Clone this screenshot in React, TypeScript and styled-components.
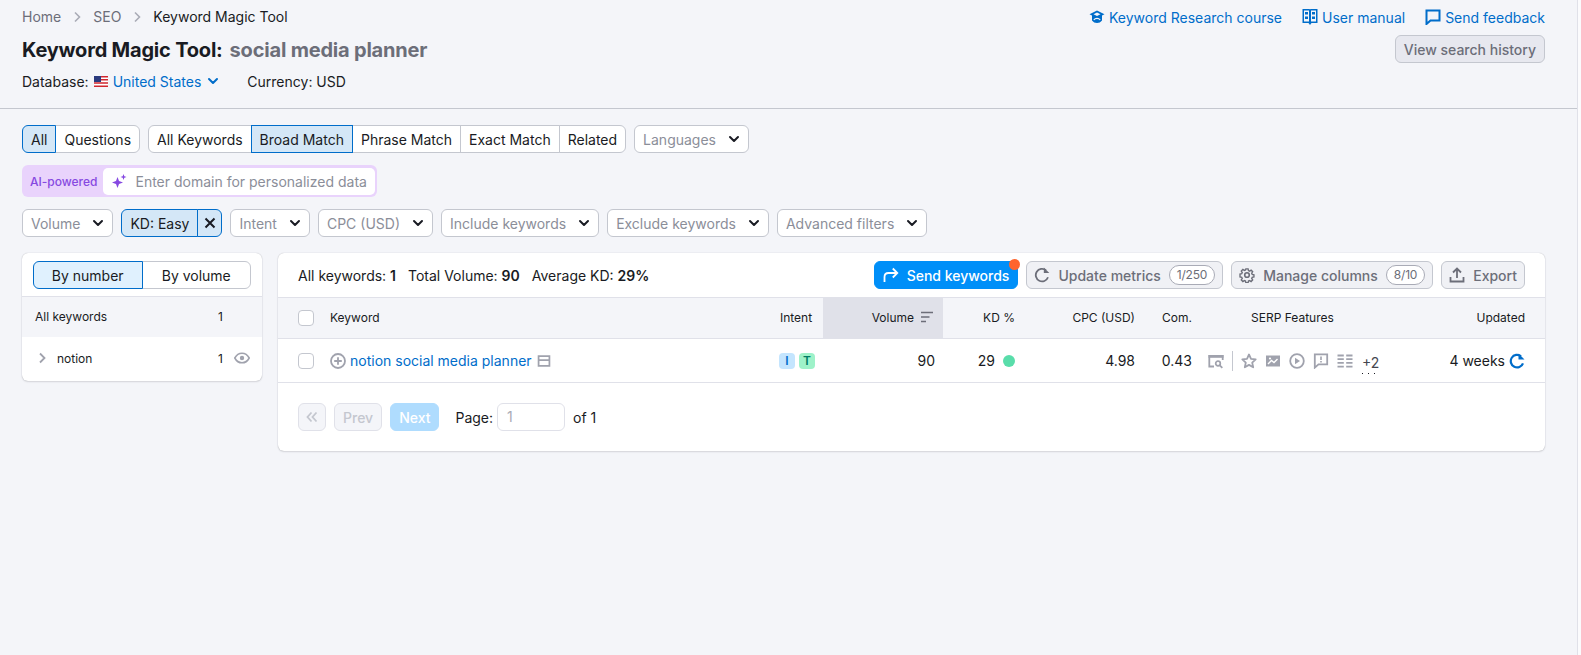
import { ReactNode } from 'react';
import styled, { createGlobalStyle } from 'styled-components';

const GlobalStyle = createGlobalStyle`
  html, body {
    margin: 0;
    padding: 0;
    height: 100%;
    background: #f4f5f9;
    color: #191b23;
    font-family: Inter, "Liberation Sans", sans-serif;
    font-size: 14px;
  }
  * {
    box-sizing: border-box;
  }
`;

const Page = styled.div`
  width: 1581px;
  height: 655px;
  overflow: hidden;
  padding-right: 3px;
  background: #fbfbfd;
`;

const Inner = styled.div`
  height: 100%;
  background: #f4f5f9;
  border-right: 1px solid #e0e1e9;
`;

const Top = styled.header`
  height: 109px;
  padding: 8px 32px 0 22px;
  border-bottom: 1px solid #c4c7cf;
  display: flex;
  justify-content: space-between;
`;

const TopLeft = styled.div`
  display: flex;
  flex-direction: column;
`;

const TopRight = styled.div`
  display: flex;
  flex-direction: column;
  align-items: flex-end;
`;

const Crumbs = styled.nav`
  display: flex;
  align-items: center;
  height: 18px;
  gap: 8px;
  color: #6c6e79;
  line-height: 18px;
`;

const CrumbCurrent = styled.span`
  color: #191b23;
`;

const Title = styled.h1`
  margin: 12px 0 0;
  font-size: 20px;
  line-height: 24px;
  font-weight: 700;
  letter-spacing: -0.2px;
`;

const TitleQuery = styled.span`
  margin-left: 7px;
  color: #6c6e79;
`;

const DbRow = styled.div`
  display: flex;
  align-items: center;
  margin-top: 9px;
  height: 20px;
`;

const Flag = styled.svg`
  width: 14px;
  height: 11px;
  margin: 0 5px 0 5px;
`;

const BlueLink = styled.a`
  color: #006dca;
  display: inline-flex;
  align-items: center;
`;

const DbChevron = styled.span`
  display: flex;
  margin-left: 6px;
`;

const Currency = styled.span`
  margin-left: 28px;
`;

const HelpLinks = styled.div`
  display: flex;
  align-items: center;
  gap: 20px;
  height: 18px;
`;

const HelpLink = styled(BlueLink)`
  gap: 4px;
`;

const HistoryButton = styled.button`
  margin-top: 9px;
  height: 28px;
  padding: 0 8px;
  border: 1px solid #c4c7cf;
  border-radius: 6px;
  background: #e7e8ef;
  color: #6c6e79;
  font: 500 14px Inter, sans-serif;
`;

const Content = styled.main`
  padding: 16px 32px 0 22px;
`;

const Row = styled.div<{ $mt?: number }>`
  display: flex;
  align-items: center;
  gap: 8px;
  margin-top: ${p => p.$mt ?? 0}px;
`;

const Segment = styled.div`
  display: flex;
  height: 28px;
`;

const SegmentItem = styled.button<{ $active?: boolean }>`
  height: 28px;
  padding: 0 8px;
  margin-left: -1px;
  border: 1px solid ${p => (p.$active ? '#006dca' : '#c4c7cf')};
  background: ${p => (p.$active ? '#d4e7f7' : '#fff')};
  color: #191b23;
  font: 400 14px Inter, sans-serif;
  position: relative;
  z-index: ${p => (p.$active ? 1 : 0)};
  &:first-child {
    margin-left: 0;
    border-radius: 6px 0 0 6px;
  }
  &:last-child {
    border-radius: 0 6px 6px 0;
  }
`;

const ClearItem = styled(SegmentItem)`
  display: flex;
  align-items: center;
  padding: 0 3.5px;
`;

const Select = styled.button`
  height: 28px;
  display: inline-flex;
  align-items: center;
  gap: 12px;
  padding: 0 8px;
  border: 1px solid #c4c7cf;
  border-radius: 6px;
  background: #fff;
  color: #8b8e99;
  font: 400 14px Inter, sans-serif;
`;

const AiBar = styled.div`
  display: inline-flex;
  align-items: center;
  height: 32px;
  padding: 2px;
  border-radius: 6px;
  background: #e9d3fc;
`;

const AiLabel = styled.span`
  padding: 0 6px;
  color: #8649e1;
  font-size: 12px;
  font-weight: 500;
`;

const AiInput = styled.div`
  display: flex;
  align-items: center;
  gap: 8px;
  width: 272px;
  height: 27px;
  padding: 0 8px;
  border-radius: 5px;
  background: #fff;
  color: #8b8e99;
`;

const Panels = styled.div`
  display: flex;
  gap: 16px;
  align-items: flex-start;
  margin-top: 16px;
`;

const Card = styled.section`
  background: #fff;
  border-radius: 6px;
  box-shadow: 0 0 1px rgba(25, 27, 35, 0.3), 0 1px 2px rgba(25, 27, 35, 0.12);
`;

const SideCard = styled(Card)`
  width: 240px;
  flex: none;
`;

const SideTabs = styled.div`
  display: flex;
  padding: 8px 11px;
  height: 44px;
  border-bottom: 1px solid #e0e1e9;
`;

const SideTab = styled(SegmentItem)`
  width: 109.5px;
  padding: 0;
  background: ${p => (p.$active ? '#e0f1fe' : '#fff')};
`;

const SideRow = styled.div<{ $head?: boolean }>`
  display: flex;
  align-items: center;
  height: ${p => (p.$head ? 40 : 44)}px;
  padding: 0 12px 2px 13px;
  background: ${p => (p.$head ? '#f4f5f9' : 'transparent')};
  font-size: 12px;
  border-radius: ${p => (p.$head ? 0 : '0 0 6px 6px')};
`;

const SideArrow = styled.span`
  display: flex;
  width: 22px;
  margin-left: -1px;
  margin-right: 1px;
`;

const SideName = styled.span`
  flex: 1;
`;

const SideCount = styled.span`
  width: 16px;
`;

const SideEye = styled.span`
  display: flex;
  width: 16px;
`;

const MainCard = styled(Card)`
  flex: 1;
`;

const StatsBar = styled.div`
  display: flex;
  align-items: center;
  height: 44px;
  padding: 0 20px;
`;

const Stat = styled.span`
  margin-right: 12px;
  b {
    font-weight: 600;
  }
`;

const Actions = styled.div`
  margin-left: auto;
  display: flex;
  gap: 8px;
`;

const Action = styled.button<{ $primary?: boolean }>`
  position: relative;
  height: 28px;
  display: inline-flex;
  align-items: center;
  gap: 8px;
  padding: 0 ${p => (p.$primary ? 8 : 7)}px;
  border-radius: 6px;
  border: 1px solid ${p => (p.$primary ? '#008ff8' : '#c4c7cf')};
  background: ${p => (p.$primary ? '#008ff8' : '#f0f1f5')};
  color: ${p => (p.$primary ? '#fff' : '#6c6e79')};
  font: 500 14px Inter, sans-serif;
`;

const Counter = styled.span`
  height: 20px;
  padding: 0 7px;
  border: 1px solid #a9abb6;
  border-radius: 10px;
  background: #fff;
  font-size: 12px;
  font-weight: 400;
  line-height: 18px;
  letter-spacing: -0.2px;
`;

const Ping = styled.span`
  position: absolute;
  top: -3px;
  right: -3px;
  width: 11px;
  height: 11px;
  border-radius: 50%;
  background: #ff642d;
`;

const Columns = '52px 442px 51px 120px 80px 120px 57px 200px 145px';

const HeadRow = styled.div`
  display: grid;
  grid-template-columns: ${Columns};
  height: 42px;
  background: #f4f5f9;
  border-top: 1px solid #e0e1e9;
  border-bottom: 1px solid #e0e1e9;
  font-size: 12px;
`;

const DataRow = styled.div`
  display: grid;
  grid-template-columns: ${Columns};
  height: 44px;
  border-bottom: 1px solid #e0e1e9;
`;

const Cell = styled.div<{ $right?: boolean; $pl?: number; $pr?: number; $bg?: string }>`
  display: flex;
  align-items: center;
  justify-content: ${p => (p.$right ? 'flex-end' : 'flex-start')};
  padding-left: ${p => p.$pl ?? 0}px;
  padding-right: ${p => p.$pr ?? 0}px;
  background: ${p => p.$bg ?? 'transparent'};
`;

const HeadLabel = styled.span`
  display: flex;
  align-items: center;
  margin-top: -2px;
`;

const CheckBox = styled.span`
  display: block;
  width: 16px;
  height: 16px;
  border: 1px solid #c4c7cf;
  border-radius: 4px;
  background: #fff;
`;

const SortIcon = styled.span`
  display: flex;
  margin-left: 5px;
`;

const KeywordLink = styled(BlueLink)`
  margin: 0 5px 0 4px;
`;

const IntentBadge = styled.span<{ $bg: string; $fg: string }>`
  display: inline-block;
  width: 16px;
  height: 16px;
  margin-right: 4px;
  border-radius: 4px;
  background: ${p => p.$bg};
  color: ${p => p.$fg};
  font-size: 12px;
  font-weight: 600;
  line-height: 16px;
  text-align: center;
`;

const KdDot = styled.span`
  width: 12px;
  height: 12px;
  margin-left: 8px;
  border-radius: 50%;
  background: #59ddaa;
`;

const SerpIcons = styled.div`
  display: flex;
  align-items: center;
  height: 100%;
  gap: 8px;
`;

const SerpDivider = styled.span`
  width: 1px;
  height: 20px;
  background: #c4c7cf;
`;

const More = styled.span`
  align-self: flex-start;
  height: 28px;
  margin-top: 7px;
  margin-left: 1px;
  padding-top: 9px;
  line-height: 16px;
  color: #44464f;
  background: repeating-linear-gradient(90deg, #191b23 0 1px, transparent 1px 6px) left bottom / 100% 1px no-repeat;
`;

const UpdatedIcon = styled.span`
  display: flex;
  margin-left: 4px;
`;

const Pager = styled.div`
  display: flex;
  align-items: center;
  height: 68px;
  padding: 0 20px;
  gap: 8px;
`;

const PageButton = styled.button<{ $next?: boolean; $icon?: boolean }>`
  height: 28px;
  padding: 0 ${p => (p.$icon ? 5 : 8)}px;
  border: 1px solid ${p => (p.$next ? '#afdcfe' : '#e0e1e9')};
  border-radius: 6px;
  background: ${p => (p.$next ? '#afdcfe' : '#f4f5f9')};
  color: ${p => (p.$next ? '#fff' : '#c4c7cf')};
  font: 500 14px Inter, sans-serif;
  display: inline-flex;
  align-items: center;
`;

const PageLabel = styled.span`
  margin-left: 8px;
`;

const PageInput = styled.span`
  width: 68px;
  height: 28px;
  margin-left: -4px;
  padding-left: 9px;
  border: 1px solid #e0e1e9;
  border-radius: 6px;
  color: #a9abb6;
  line-height: 26px;
`;

const CrumbSvg = styled.svg`
  margin: 0 4px;
`;

const IconSvg = styled.svg`
  flex: none;
`;

const Chevron = ({ color = '#191b23' }: { color?: string }) => (
  <svg width="12" height="8" viewBox="0 0 12 8">
    <path d="M2 2l4 4 4-4" fill="none" stroke={color} strokeWidth="2" strokeLinecap="round" strokeLinejoin="round" />
  </svg>
);

const CrumbArrow = () => (
  <CrumbSvg width="8" height="12" viewBox="0 0 8 12">
    <path d="M2 1.500L6.500 6 2 10.500" fill="none" stroke="#a9abb6" strokeWidth="1.600" />
  </CrumbSvg>
);

const Icon = ({ size = 16, children }: { size?: number; children: ReactNode }) => (
  <IconSvg width={size} height={size} viewBox="0 0 16 16" fill="none">
    {children}
  </IconSvg>
);

const UsFlag = () => (
  <Flag viewBox="0 0 14 11">
    <rect width="14" height="11" fill="#fff" />
    <path d="M0 0h14v1.500H0zM0 3h14v1.500H0zM0 6.200h14v1.500H0zM0 9.400h14V11H0z" fill="#d0262e" />
    <rect width="7" height="6" fill="#2a3a7e" />
  </Flag>
);

const Filter = ({ children }: { children: ReactNode }) => (
  <Select>
    {children}
    <Chevron />
  </Select>
);

const grey = '#a0a2ad';

const App = () => (
  <Page>
    <GlobalStyle />
    <Inner>
      <Top>
        <TopLeft>
          <Crumbs>
            Home
            <CrumbArrow />
            SEO
            <CrumbArrow />
            <CrumbCurrent>Keyword Magic Tool</CrumbCurrent>
          </Crumbs>
          <Title>
            Keyword Magic Tool:
            <TitleQuery>social media planner</TitleQuery>
          </Title>
          <DbRow>
            Database:
            <UsFlag />
            <BlueLink>United States</BlueLink>
            <DbChevron>
              <Chevron color="#006dca" />
            </DbChevron>
            <Currency>Currency: USD</Currency>
          </DbRow>
        </TopLeft>
        <TopRight>
          <HelpLinks>
            <HelpLink>
              <Icon>
                <path d="M8 1.500L.5 5.300 3 6.600v4.900c1.300 1.700 3 2.500 5 2.500s3.700-.8 5-2.500V6.600l2.500-1.300L8 1.500z" fill="#006dca" />
                <path d="M8 3.500L4.500 5.300 8 7l3.500-1.700z" fill="#f4f5f9" />
                <path d="M4.800 10.800C5.600 9.900 6.700 9.400 8 9.400s2.400.5 3.200 1.400" stroke="#f4f5f9" strokeWidth="1.200" />
              </Icon>
              Keyword Research course
            </HelpLink>
            <HelpLink>
              <Icon>
                <path d="M.5 0h7l.5.600.5-.6h7v14H9.500L8 16l-1.500-2H.5z" fill="#006dca" />
                <path d="M2 1.500h5v11H2zM9 1.500h5v11H9z" fill="#f4f5f9" />
                <path d="M3 3h3v2.500H3zM10 3h3v2.500h-3zM3 7.500h3V10H3zM10 7.500h3V10h-3z" fill="#006dca" />
              </Icon>
              User manual
            </HelpLink>
            <HelpLink>
              <Icon>
                <path d="M1.500 1.500h13v10H5.500l-4 3.500z" stroke="#006dca" strokeWidth="2" />
              </Icon>
              Send feedback
            </HelpLink>
          </HelpLinks>
          <HistoryButton>View search history</HistoryButton>
        </TopRight>
      </Top>

      <Content>
        <Row>
          <Segment>
            <SegmentItem $active>All</SegmentItem>
            <SegmentItem>Questions</SegmentItem>
          </Segment>
          <Segment>
            <SegmentItem>All Keywords</SegmentItem>
            <SegmentItem $active>Broad Match</SegmentItem>
            <SegmentItem>Phrase Match</SegmentItem>
            <SegmentItem>Exact Match</SegmentItem>
            <SegmentItem>Related</SegmentItem>
          </Segment>
          <Filter>Languages</Filter>
        </Row>
        <Row $mt={12}>
          <AiBar>
            <AiLabel>AI-powered</AiLabel>
            <AiInput>
              <Icon>
                <path d="M6.500 4l1.500 4 4 1.500-4 1.500-1.500 4L5 11 1 9.500 5 8z" fill="#8649e1" />
                <path d="M12.500 1l.8 2.200 2.200.8-2.200.8-.8 2.200-.8-2.200-2.200-.8 2.200-.8z" fill="#8649e1" />
              </Icon>
              Enter domain for personalized data
            </AiInput>
          </AiBar>
        </Row>
        <Row $mt={12}>
          <Filter>Volume</Filter>
          <Segment>
            <SegmentItem $active>KD: Easy</SegmentItem>
            <ClearItem $active>
              <Icon>
                <path d="M3.500 3.500l9 9M12.500 3.500l-9 9" stroke="#191b23" strokeWidth="2" />
              </Icon>
            </ClearItem>
          </Segment>
          <Filter>Intent</Filter>
          <Filter>CPC (USD)</Filter>
          <Filter>Include keywords</Filter>
          <Filter>Exclude keywords</Filter>
          <Filter>Advanced filters</Filter>
        </Row>

        <Panels>
          <SideCard>
            <SideTabs>
              <SideTab $active>By number</SideTab>
              <SideTab>By volume</SideTab>
            </SideTabs>
            <SideRow $head>
              <SideName>All keywords</SideName>
              <SideCount>1</SideCount>
              <SideEye />
            </SideRow>
            <SideRow>
              <SideArrow>
                <Icon>
                  <path d="M6 3.500L10.500 8 6 12.500" stroke={grey} strokeWidth="1.800" />
                </Icon>
              </SideArrow>
              <SideName>notion</SideName>
              <SideCount>1</SideCount>
              <SideEye>
                <Icon>
                  <path d="M.8 8c1.700-3.200 4.100-4.800 7.200-4.800s5.500 1.600 7.200 4.800c-1.700 3.200-4.100 4.800-7.200 4.800S2.500 11.200.8 8z" stroke={grey} strokeWidth="1.600" />
                  <circle cx="8" cy="8" r="2.200" fill={grey} />
                </Icon>
              </SideEye>
            </SideRow>
          </SideCard>

          <MainCard>
            <StatsBar>
              <Stat>All keywords: <b>1</b></Stat>
              <Stat>Total Volume: <b>90</b></Stat>
              <Stat>Average KD: <b>29%</b></Stat>
              <Actions>
                <Action $primary>
                  <Icon>
                    <path d="M1.500 15v-5c0-2.500 1.500-4 4-4h8.500M9.800 1.500L14.300 6l-4.500 4.500" stroke="#fff" strokeWidth="1.800" />
                  </Icon>
                  Send keywords
                  <Ping />
                </Action>
                <Action>
                  <Icon>
                    <path d="M14 10.300A6.300 6.300 0 1 1 12 3.200" stroke="#6c6e79" strokeWidth="1.800" />
                    <path d="M9.800.5v5.500h5.500z" fill="#6c6e79" />
                  </Icon>
                  Update metrics
                  <Counter>1/250</Counter>
                </Action>
                <Action>
                  <Icon>
                    <circle cx="8" cy="8" r="2.300" stroke="#6c6e79" strokeWidth="1.600" />
                    <path d="M6.700.9h2.600l.4 2 1.300.6 1.800-1.100 1.800 1.800-1.100 1.800.6 1.300 2 .4v2.600l-2 .4-.6 1.300 1.100 1.800-1.800 1.800-1.800-1.100-1.300.6-.4 2H6.700l-.4-2-1.300-.6-1.800 1.100-1.800-1.800 1.100-1.800-.6-1.300-2-.4V6.900l2-.4.6-1.300-1.100-1.800 1.800-1.800 1.800 1.100 1.300-.6z" stroke="#6c6e79" strokeWidth="1.600" transform="translate(1.100 1.100) scale(.86)" />
                  </Icon>
                  Manage columns
                  <Counter>8/10</Counter>
                </Action>
                <Action>
                  <Icon>
                    <path d="M8 11V1.500M4 5.500l4-4 4 4M1.500 10v4.500h13V10" stroke="#6c6e79" strokeWidth="1.800" />
                  </Icon>
                  Export
                </Action>
              </Actions>
            </StatsBar>

            <HeadRow>
              <Cell $pl={20}><CheckBox /></Cell>
              <Cell><HeadLabel>Keyword</HeadLabel></Cell>
              <Cell $pl={8}><HeadLabel>Intent</HeadLabel></Cell>
              <Cell $right $pr={8} $bg="#e0e1e9">
                <HeadLabel>
                  Volume
                  <SortIcon>
                    <Icon>
                      <path d="M2 3.500h12M2 8h8.500M2 12.500h5" stroke="#6c6e79" strokeWidth="1.600" />
                    </Icon>
                  </SortIcon>
                </HeadLabel>
              </Cell>
              <Cell $right $pr={8}><HeadLabel>KD %</HeadLabel></Cell>
              <Cell $right $pr={8}><HeadLabel>CPC (USD)</HeadLabel></Cell>
              <Cell $right $pr={8}><HeadLabel>Com.</HeadLabel></Cell>
              <Cell $pl={51}><HeadLabel>SERP Features</HeadLabel></Cell>
              <Cell $right $pr={20}><HeadLabel>Updated</HeadLabel></Cell>
            </HeadRow>

            <DataRow>
              <Cell $pl={20}><CheckBox /></Cell>
              <Cell>
                <Icon>
                  <circle cx="8" cy="8" r="7" stroke={grey} strokeWidth="1.800" />
                  <path d="M8 4.200v7.600M4.200 8h7.600" stroke={grey} strokeWidth="1.800" />
                </Icon>
                <KeywordLink>notion social media planner</KeywordLink>
                <Icon size={14}>
                  <path d="M1.800 2.300h12.400v11.400H1.800zM1.800 7h12.400" stroke={grey} strokeWidth="2" />
                </Icon>
              </Cell>
              <Cell $pl={7}>
                <IntentBadge $bg="#c4e5fe" $fg="#006dca">I</IntentBadge>
                <IntentBadge $bg="#9ef2c9" $fg="#007c65">T</IntentBadge>
              </Cell>
              <Cell $right $pr={8}>90</Cell>
              <Cell $right $pr={8}>29<KdDot /></Cell>
              <Cell $right $pr={8}>4.98</Cell>
              <Cell $right $pr={8}>0.43</Cell>
              <Cell $pl={8}>
                <SerpIcons>
                  <Icon>
                    <path d="M14.700 7V3H1.300v10.500H6" stroke={grey} strokeWidth="1.800" />
                    <path d="M.5 2h15v2.800H.5z" fill={grey} />
                    <circle cx="10" cy="10.500" r="2.300" stroke={grey} strokeWidth="1.700" />
                    <path d="M11.800 12.300l2.500 2.500" stroke={grey} strokeWidth="1.800" />
                  </Icon>
                  <SerpDivider />
                  <Icon>
                    <path d="M8 1.500l2 4.300 4.700.6-3.500 3.200 1 4.700L8 11.900l-4.200 2.400 1-4.700L1.300 6.400 6 5.800z" stroke={grey} strokeWidth="1.800" strokeLinejoin="round" />
                  </Icon>
                  <Icon>
                    <path d="M1 2.500h14v11H1z" fill={grey} />
                    <path d="M3 11l3.500-3.500 2.500 2 3.500-3.500" stroke="#fff" strokeWidth="1.400" />
                    <circle cx="5" cy="5.500" r="1.100" fill="#fff" />
                  </Icon>
                  <Icon>
                    <circle cx="8" cy="8" r="6.800" stroke={grey} strokeWidth="1.800" />
                    <path d="M6 4.800l5 3.200-5 3.200z" fill={grey} />
                  </Icon>
                  <Icon>
                    <path d="M1.800 1.300h12.400v10H5.500l-3.700 3.300z" stroke={grey} strokeWidth="1.800" />
                    <path d="M7.200 3.500h1.600v3.600H7.200zM7.200 7.900h1.600v1.500H7.200z" fill={grey} />
                  </Icon>
                  <Icon>
                    <path d="M.5 2.500h6.300M9.200 2.500h6.300M.5 6.200h6.300M9.200 6.200h6.300M.5 9.900h6.300M9.200 9.900h6.300M.5 13.600h6.300M9.200 13.600h6.300" stroke={grey} strokeWidth="1.800" />
                  </Icon>
                  <More>+2</More>
                </SerpIcons>
              </Cell>
              <Cell $right $pr={20}>
                4 weeks
                <UpdatedIcon>
                  <Icon>
                    <path d="M14 10.300A6.300 6.300 0 1 1 12 3.200" stroke="#006dca" strokeWidth="2.200" />
                    <path d="M9.500.5V6.500h6z" fill="#006dca" />
                  </Icon>
                </UpdatedIcon>
              </Cell>
            </DataRow>

            <Pager>
              <PageButton $icon>
                <Icon>
                  <path d="M7.500 3.500L3.500 8l4 4.500M12.500 3.500L8.500 8l4 4.500" stroke="#c4c7cf" strokeWidth="1.800" />
                </Icon>
              </PageButton>
              <PageButton>Prev</PageButton>
              <PageButton $next>Next</PageButton>
              <PageLabel>Page:</PageLabel>
              <PageInput>1</PageInput>
              <span>of 1</span>
            </Pager>
          </MainCard>
        </Panels>
      </Content>
    </Inner>
  </Page>
);

export default App;
